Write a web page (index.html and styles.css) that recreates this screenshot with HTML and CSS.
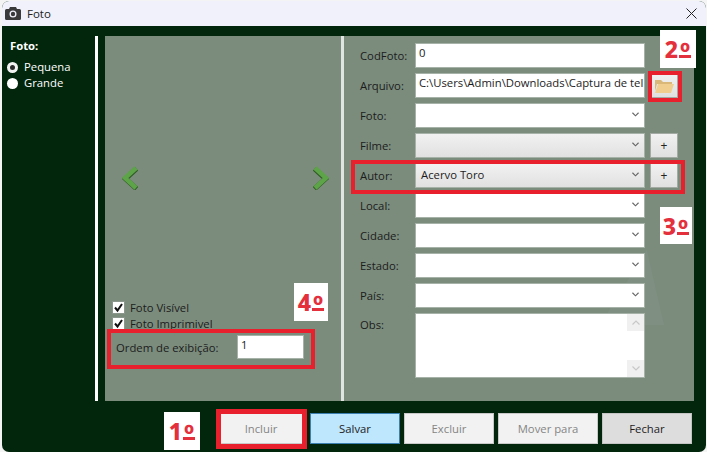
FILE: index.html
```html
<!DOCTYPE html>
<html lang="en">
<head>
    <meta charset="UTF-8">
    <title>Foto</title>
    <link rel="stylesheet" href="styles.css">
</head>
<body>
    <div class="window">
        <header class="titlebar">
            <svg class="camera" width="16" height="13" viewBox="0 0 16 13">
                <path fill="#3a3a3a" fill-rule="evenodd" d="M5 0h6l1 2h2.500A1.500 1.500 0 0 1 16 3.500v8A1.500 1.500 0 0 1 14.500 13h-13A1.500 1.500 0 0 1 0 11.500v-8A1.500 1.500 0 0 1 1.500 2H4zM8 3.500a3.500 3.500 0 1 0 0 7 3.500 3.500 0 0 0 0-7z"/>
                <circle cx="8" cy="7" r="2.200" fill="#3a3a3a"/>
            </svg>
            <span class="title">Foto</span>
            <svg class="close" width="11" height="11" viewBox="0 0 11 11">
                <path d="M.5.500l10 10M10.500.500l-10 10" stroke="#222" stroke-width="1" fill="none"/>
            </svg>
        </header>

        <div class="main">
            <aside class="sidebar">
                <div class="sidebar-title">Foto:</div>
                <div class="radio-row"><span class="radio checked"></span>Pequena</div>
                <div class="radio-row"><span class="radio"></span>Grande</div>
            </aside>
            <div class="panel">
                <section class="preview">
                    <div class="arrows">
                        <svg width="16" height="24" viewBox="0 0 16 24">
                            <path d="M14 2L3 12l11 10" fill="none" stroke="#2f5a23" stroke-width="5" transform="translate(0.500 0.800)"/>
                            <path d="M14 2L3 12l11 10" fill="none" stroke="#5da347" stroke-width="4.500"/>
                        </svg>
                        <svg width="16" height="24" viewBox="0 0 16 24">
                            <path d="M2 2l11 10L2 22" fill="none" stroke="#2f5a23" stroke-width="5" transform="translate(-0.500 0.800)"/>
                            <path d="M2 2l11 10L2 22" fill="none" stroke="#5da347" stroke-width="4.500"/>
                        </svg>
                    </div>
                    <div class="check-row"><span class="check"><svg width="11" height="11" viewBox="0 0 11 11"><path d="M2 5.500L4.500 8.500 9 2" fill="none" stroke="#111" stroke-width="2"/></svg></span>Foto Visível</div>
                    <div class="check-row"><span class="check"><svg width="11" height="11" viewBox="0 0 11 11"><path d="M2 5.500L4.500 8.500 9 2" fill="none" stroke="#111" stroke-width="2"/></svg></span>Foto Imprimivel</div>
                    <div class="order-row">
                        <span>Ordem de exibição:</span>
                        <div class="text-box order-box">1</div>
                    </div>
                </section>

                <section class="form">
                    <label>CodFoto:</label><div class="text-box">0</div><span></span>
                    <label>Arquivo:</label><div class="text-box">C:\Users\Admin\Downloads\Captura de tel</div>
                    <button class="small-btn folder-btn">
                        <svg width="21" height="16" viewBox="0 0 21 16">
                            <path fill="#d9b878" d="M1 2h6l2 2h9v2H3L1 13z"/>
                            <path fill="#f0cf8e" d="M4 6h16l-3 9H1z"/>
                        </svg>
                    </button>
                    <label>Foto:</label><div class="combo"><svg class="chevron" width="7" height="5" viewBox="0 0 8 5"><path d="M.5.500L4 4 7.500.500" fill="none" stroke="#666" stroke-width="1.300"/></svg></div><span></span>
                    <label>Filme:</label><div class="combo disabled"><svg class="chevron" width="7" height="5" viewBox="0 0 8 5"><path d="M.5.500L4 4 7.500.500" fill="none" stroke="#666" stroke-width="1.300"/></svg></div><button class="small-btn">+</button>
                    <label>Autor:</label><div class="combo disabled">Acervo Toro<svg class="chevron" width="7" height="5" viewBox="0 0 8 5"><path d="M.5.500L4 4 7.500.500" fill="none" stroke="#666" stroke-width="1.300"/></svg></div><button class="small-btn">+</button>
                    <label>Local:</label><div class="combo"><svg class="chevron" width="7" height="5" viewBox="0 0 8 5"><path d="M.5.500L4 4 7.500.500" fill="none" stroke="#666" stroke-width="1.300"/></svg></div><span></span>
                    <label>Cidade:</label><div class="combo"><svg class="chevron" width="7" height="5" viewBox="0 0 8 5"><path d="M.5.500L4 4 7.500.500" fill="none" stroke="#666" stroke-width="1.300"/></svg></div><span></span>
                    <label>Estado:</label><div class="combo"><svg class="chevron" width="7" height="5" viewBox="0 0 8 5"><path d="M.5.500L4 4 7.500.500" fill="none" stroke="#666" stroke-width="1.300"/></svg></div><span></span>
                    <label>País:</label><div class="combo"><svg class="chevron" width="7" height="5" viewBox="0 0 8 5"><path d="M.5.500L4 4 7.500.500" fill="none" stroke="#666" stroke-width="1.300"/></svg></div><span></span>
                    <label>Obs:</label>
                    <div class="text-box memo">
                        <div class="scroll-btn"><svg width="8" height="5" viewBox="0 0 8 5"><path d="M.5 4.500L4 1l3.500 3.500" fill="none" stroke="#c8c8c8" stroke-width="1.200"/></svg></div>
                        <div class="scroll-btn"><svg width="8" height="5" viewBox="0 0 8 5"><path d="M.5.500L4 4 7.500.500" fill="none" stroke="#c8c8c8" stroke-width="1.200"/></svg></div>
                    </div>
                </section>
            </div>
        </div>

        <footer class="actions">
            <button class="action off">Incluir</button>
            <button class="action save">Salvar</button>
            <button class="action off">Excluir</button>
            <button class="action off wide">Mover para</button>
            <button class="action close-btn">Fechar</button>
        </footer>
    </div>

    <!-- red marks drawn over the screenshot -->
    <div class="mark mark-folder"></div>
    <div class="mark mark-autor"></div>
    <div class="mark mark-order"></div>
    <div class="mark mark-incluir"></div>
    <div class="step step-2">2<span class="ord">º</span></div>
    <div class="step step-3">3<span class="ord">º</span></div>
    <div class="step step-4">4<span class="ord">º</span></div>
    <div class="step step-1">1<span class="ord">º</span></div>
</body>
</html>
```

FILE: styles.css
```css
* {
    box-sizing: border-box;
}
body {
    margin: 0;
    height: 452px;
    overflow: hidden;
    position: relative;
    background-color: #f4f4f4;
    font-family: "Open Sans", Arial, sans-serif;
    font-size: 11.3px;
    color: #1c1c1c;
}
.window {
    margin: 1px 1px 0 2px;
    height: 451px;
    display: flex;
    flex-direction: column;
    background-color: #02260c;
    border-radius: 7px;
    overflow: hidden;
}
.titlebar {
    height: 25px;
    flex: none;
    display: flex;
    align-items: center;
    padding: 0 9px 0 3px;
    background-color: #f0f1fa;
}
.camera {
    margin-right: 6px;
}
.title {
    font-size: 11.5px;
    color: #222;
}
.close {
    margin-left: auto;
}
.main {
    height: 375px;
    flex: none;
    display: flex;
    padding-top: 10px;
}
.sidebar {
    width: 93px;
    flex: none;
    padding: 2px 0 0 5px;
    color: white;
}
.sidebar-title {
    font-weight: bold;
    padding-left: 3px;
    margin-bottom: 5px;
    line-height: 16px;
}
.radio-row {
    display: flex;
    align-items: center;
    height: 16px;
    line-height: 16px;
}
.radio {
    width: 11px;
    height: 11px;
    margin-right: 6px;
    border-radius: 50%;
    background-color: white;
}
.radio.checked {
    background-color: #2a2a2a;
    border: 3px solid #f2f2f2;
}
.panel {
    width: 599px;
    flex: none;
    display: flex;
    border-left: 3px solid white;
    background: linear-gradient(#02260c, #02260c) left / 7px 100% no-repeat, #7b8c7d;
}
.preview {
    width: 246px;
    flex: none;
    padding: 0 37px 42px 14px;
    display: flex;
    flex-direction: column;
    border-right: 3px solid #dfe5e0;
}
.arrows {
    display: flex;
    justify-content: space-between;
    margin: 130px -25px auto 10px;
}
.check-row {
    display: flex;
    align-items: center;
    height: 16px;
}
.check {
    width: 13px;
    height: 13px;
    margin-right: 5px;
    background-color: white;
    border: 1px solid #8b968c;
    display: flex;
}
.order-row {
    display: flex;
    align-items: center;
    justify-content: space-between;
    padding-left: 4px;
    margin-top: 4px;
}
.form {
    flex: 1;
    position: relative;
    isolation: isolate;
    padding: 7px 16px 0 16px;
    display: grid;
    grid-template-columns: 50px 230px 28px;
    grid-auto-rows: 25px;
    gap: 5px;
    align-items: center;
    align-content: start;
}
/* faint shape in the background picture, to the right of the fields */
.form::before {
    content: "";
    position: absolute;
    z-index: -1;
    left: 256px;
    top: 214px;
    width: 64px;
    height: 75px;
    background-color: #7f9082;
    clip-path: polygon(73% 0, 100% 100%, 0 100%);
}
.form label {
    white-space: nowrap;
}
.text-box {
    height: 25px;
    padding: 1px 3px;
    background-color: white;
    border: 1px solid #a6b1a7;
    line-height: 16px;
    white-space: nowrap;
    overflow: hidden;
}
.order-box {
    width: 67px;
    height: 24px;
}
.combo {
    height: 25px;
    padding: 0 0 3px 5px;
    display: flex;
    align-items: center;
    background-color: white;
    border: 1px solid #a6b1a7;
}
.combo .chevron {
    margin-left: auto;
    margin-right: 5px;
}
.combo.disabled {
    background: linear-gradient(#f1f1f1, #e1e1e1);
}
.small-btn {
    width: 28px;
    height: 25px;
    padding: 0;
    display: flex;
    align-items: center;
    justify-content: center;
    background: linear-gradient(#f1f1f1, #e0e0e0);
    border: 1px solid #a3a9a3;
    font-family: inherit;
    font-size: 12px;
    color: #222;
}
.memo {
    height: 65px;
    padding: 0;
    display: flex;
    flex-direction: column;
    align-items: flex-end;
    justify-content: space-between;
    align-self: start;
}
.form label:nth-last-of-type(1) {
    align-self: start;
    padding-top: 4px;
}
.scroll-btn {
    width: 17px;
    height: 17px;
    display: flex;
    align-items: center;
    justify-content: center;
    background-color: #f0f0f0;
}
.actions {
    flex: 1;
    display: flex;
    justify-content: flex-end;
    gap: 4px;
    padding: 12px 14px 0 0;
}
.action {
    width: 90px;
    height: 31px;
    padding: 0;
    border: 1px solid #c9c9c9;
    background-color: #f2f2f2;
    font-family: inherit;
    font-size: 11.3px;
    color: #1c1c1c;
}
.action.wide {
    width: 100px;
}
.action.off {
    color: #858585;
}
.action.save {
    background-color: #bee6fd;
    border-color: #3c7fb1;
}
.action.close-btn {
    background-color: #dddddd;
    border-color: #c4c4c4;
}
.mark {
    position: absolute;
    border: 4px solid #e8202e;
}
.mark-folder {
    left: 648px;
    top: 71px;
    width: 34px;
    height: 31px;
}
.mark-autor {
    left: 351px;
    top: 160px;
    width: 334px;
    height: 34px;
}
.mark-order {
    left: 107px;
    top: 329px;
    width: 208px;
    height: 40px;
}
.mark-incluir {
    left: 216px;
    top: 409px;
    width: 91px;
    height: 40px;
    border-width: 5px;
}
.step {
    position: absolute;
    background-color: white;
    color: #e3303c;
    font-family: "Noto Sans", Arial, sans-serif;
    font-weight: 800;
    font-size: 23px;
    line-height: 38px;
    text-align: center;
}
.ord {
    display: inline-block;
    width: 12px;
    height: 17px;
    margin-left: 1px;
    font-size: 26px;
    line-height: 20px;
    vertical-align: -3px;
    border-bottom: 3px solid #e3303c;
}
.step-2 {
    left: 660px;
    top: 30px;
    width: 36px;
    height: 38px;
}
.step-3 {
    left: 660px;
    top: 207px;
    width: 32px;
    height: 37px;
}
.step-4 {
    left: 294px;
    top: 283px;
    width: 34px;
    height: 38px;
}
.step-1 {
    left: 164px;
    top: 412px;
    width: 36px;
    height: 38px;
}
```
